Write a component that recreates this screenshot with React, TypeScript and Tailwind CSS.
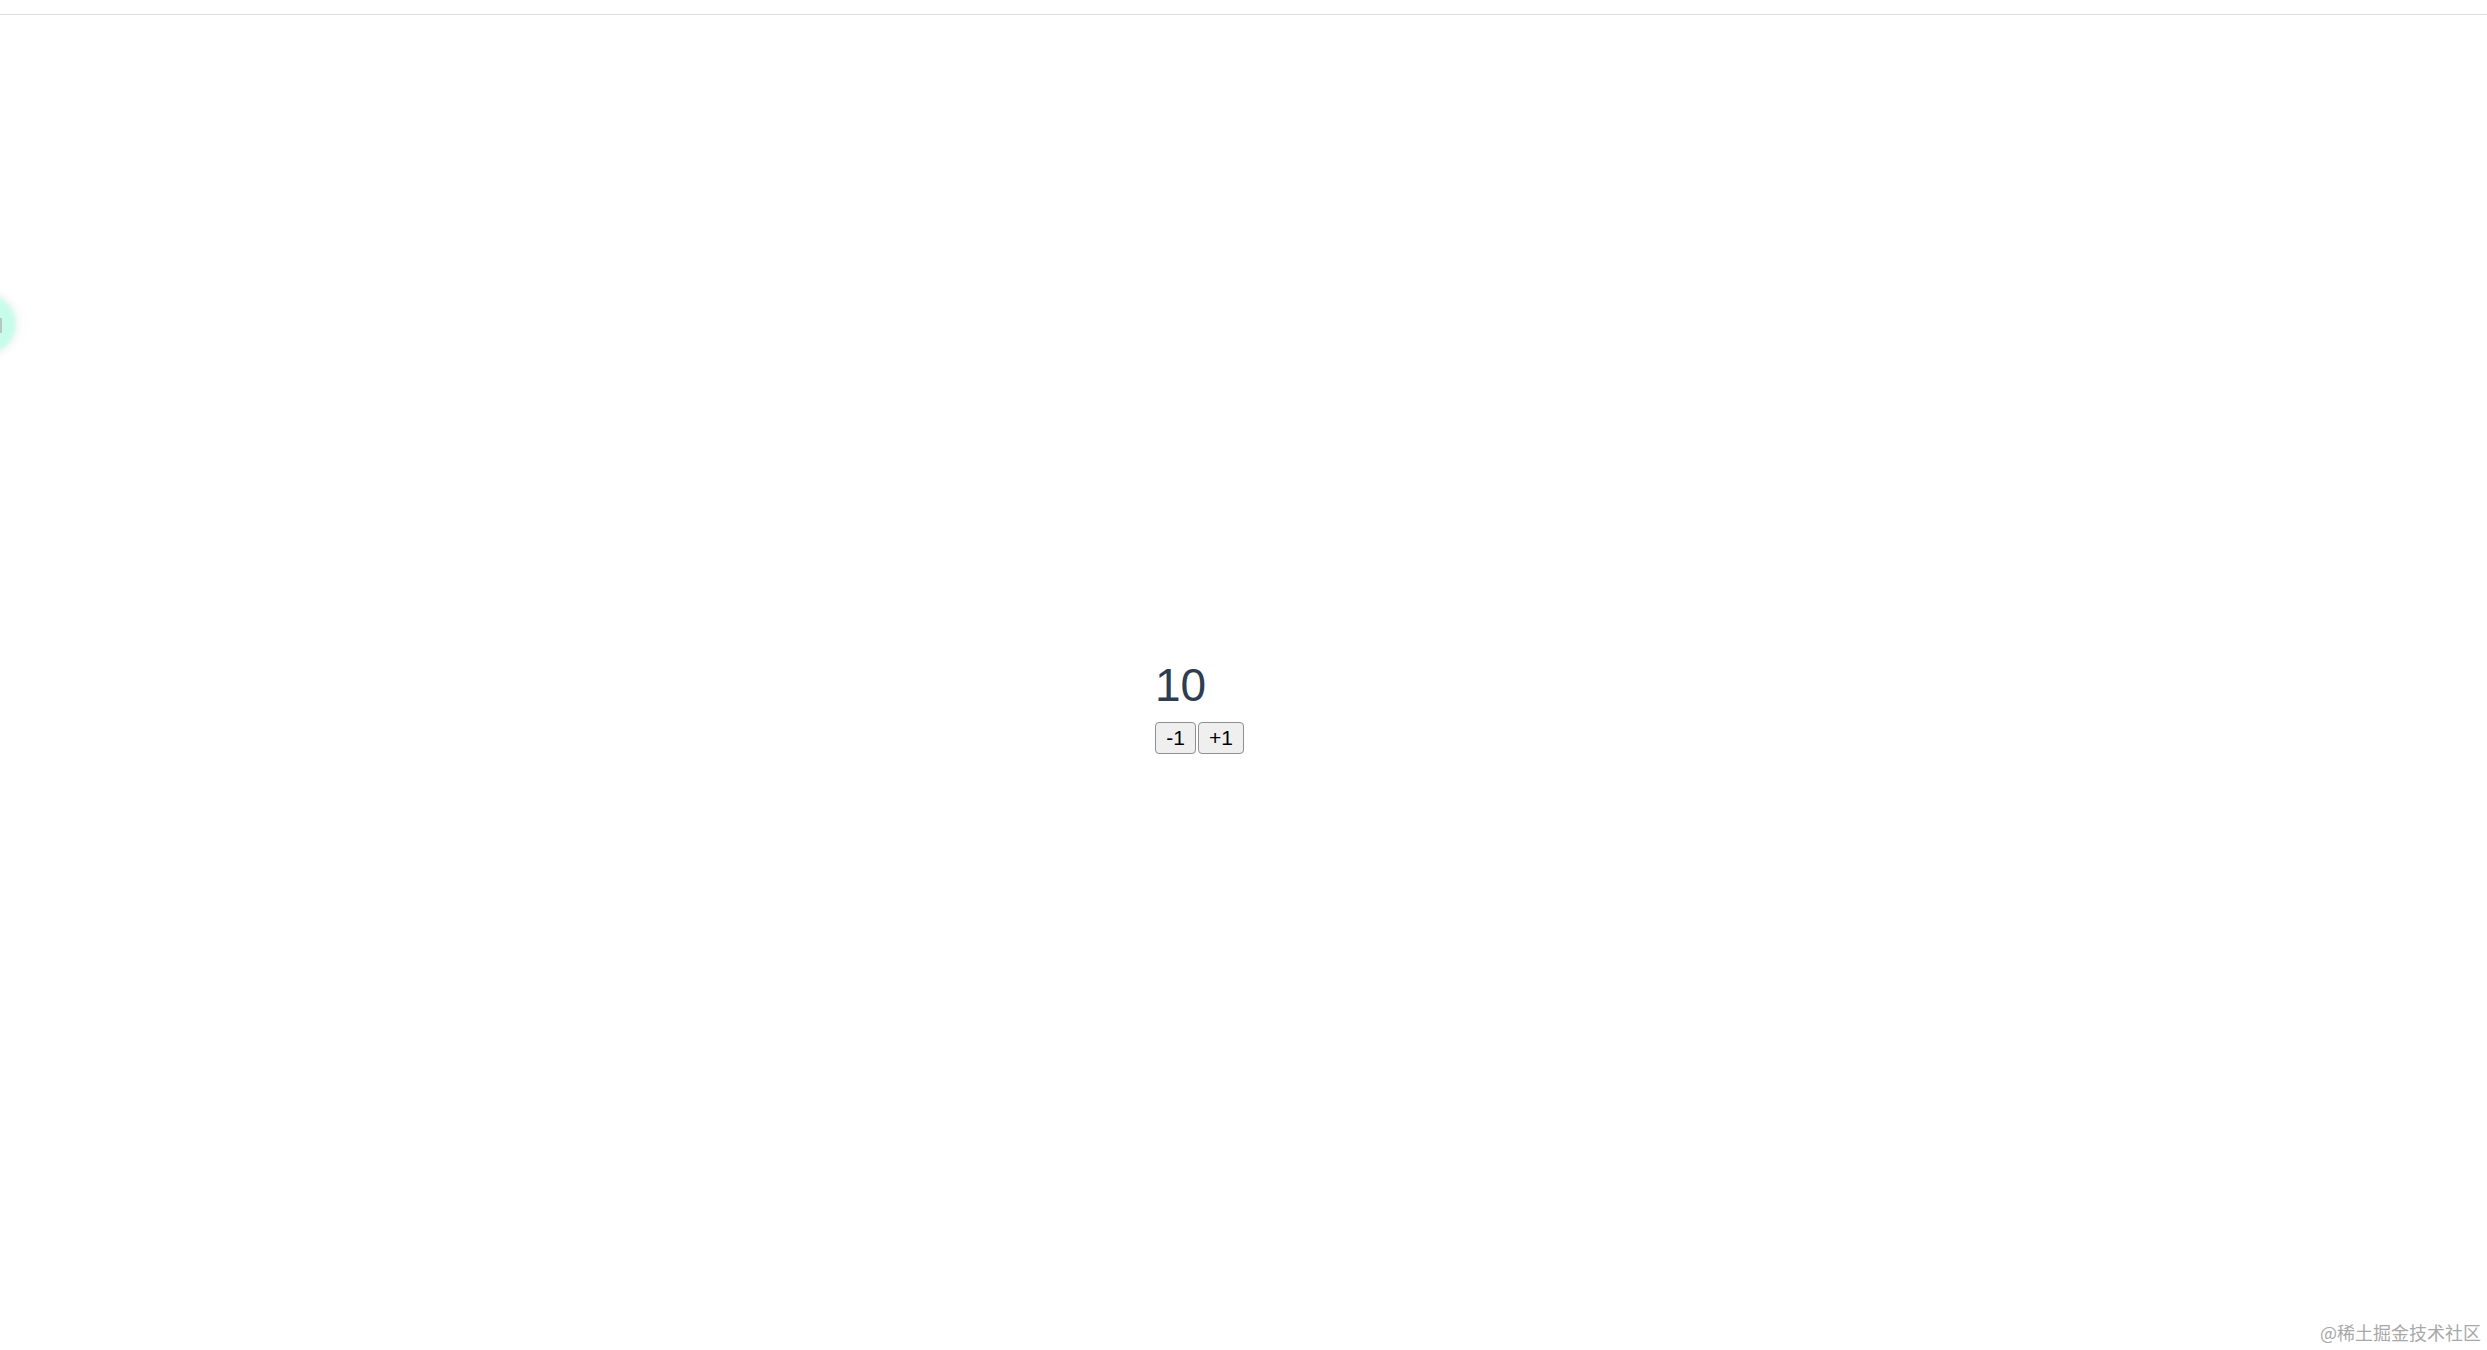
import React, { useState } from "react";

export default function App() {
  const [count, setCount] = useState(10);
  return (
    <div className="relative w-full h-[1350px] overflow-hidden bg-white" style={{ fontFamily: '"Liberation Sans", Arial, sans-serif' }}>
      <div className="h-[15px] border-b-[1.5px] border-[#dedede]" />
      <div className="pt-[644px] pl-[1155px] flex flex-col items-start">
        <div className="text-[46px] leading-[52px] text-[#2c3e50] font-light">{count}</div>
        <div className="mt-[11px] flex gap-[2px]">
          <button
            onClick={() => setCount((c) => c - 1)}
            className="w-[41px] h-[32px] flex items-center justify-center text-[21px] text-black bg-[#efefef] border-[1.5px] border-[#8f8f8f] rounded-[4px]"
          >
            -1
          </button>
          <button
            onClick={() => setCount((c) => c + 1)}
            className="w-[46px] h-[32px] flex items-center justify-center text-[21px] text-black bg-[#efefef] border-[1.5px] border-[#8f8f8f] rounded-[4px]"
          >
            +1
          </button>
        </div>
      </div>

      <div className="absolute left-[-44px] top-[294px] w-[60px] h-[60px] rounded-full bg-[#c8fcea] blur-[2px] shadow-[0_0_12px_rgba(0,0,0,0.08)]" />
      <div className="absolute left-0 top-[318px] w-[2px] h-[15px] bg-[#b8c8c0]" />

      <div
        className="absolute right-[6px] bottom-[8px] text-[18px] leading-[20px] text-[#a8a8a8]"
        style={{ fontFamily: '"Noto Sans CJK SC", "Liberation Sans", sans-serif' }}
      >
        @稀土掘金技术社区
      </div>
    </div>
  );
}
